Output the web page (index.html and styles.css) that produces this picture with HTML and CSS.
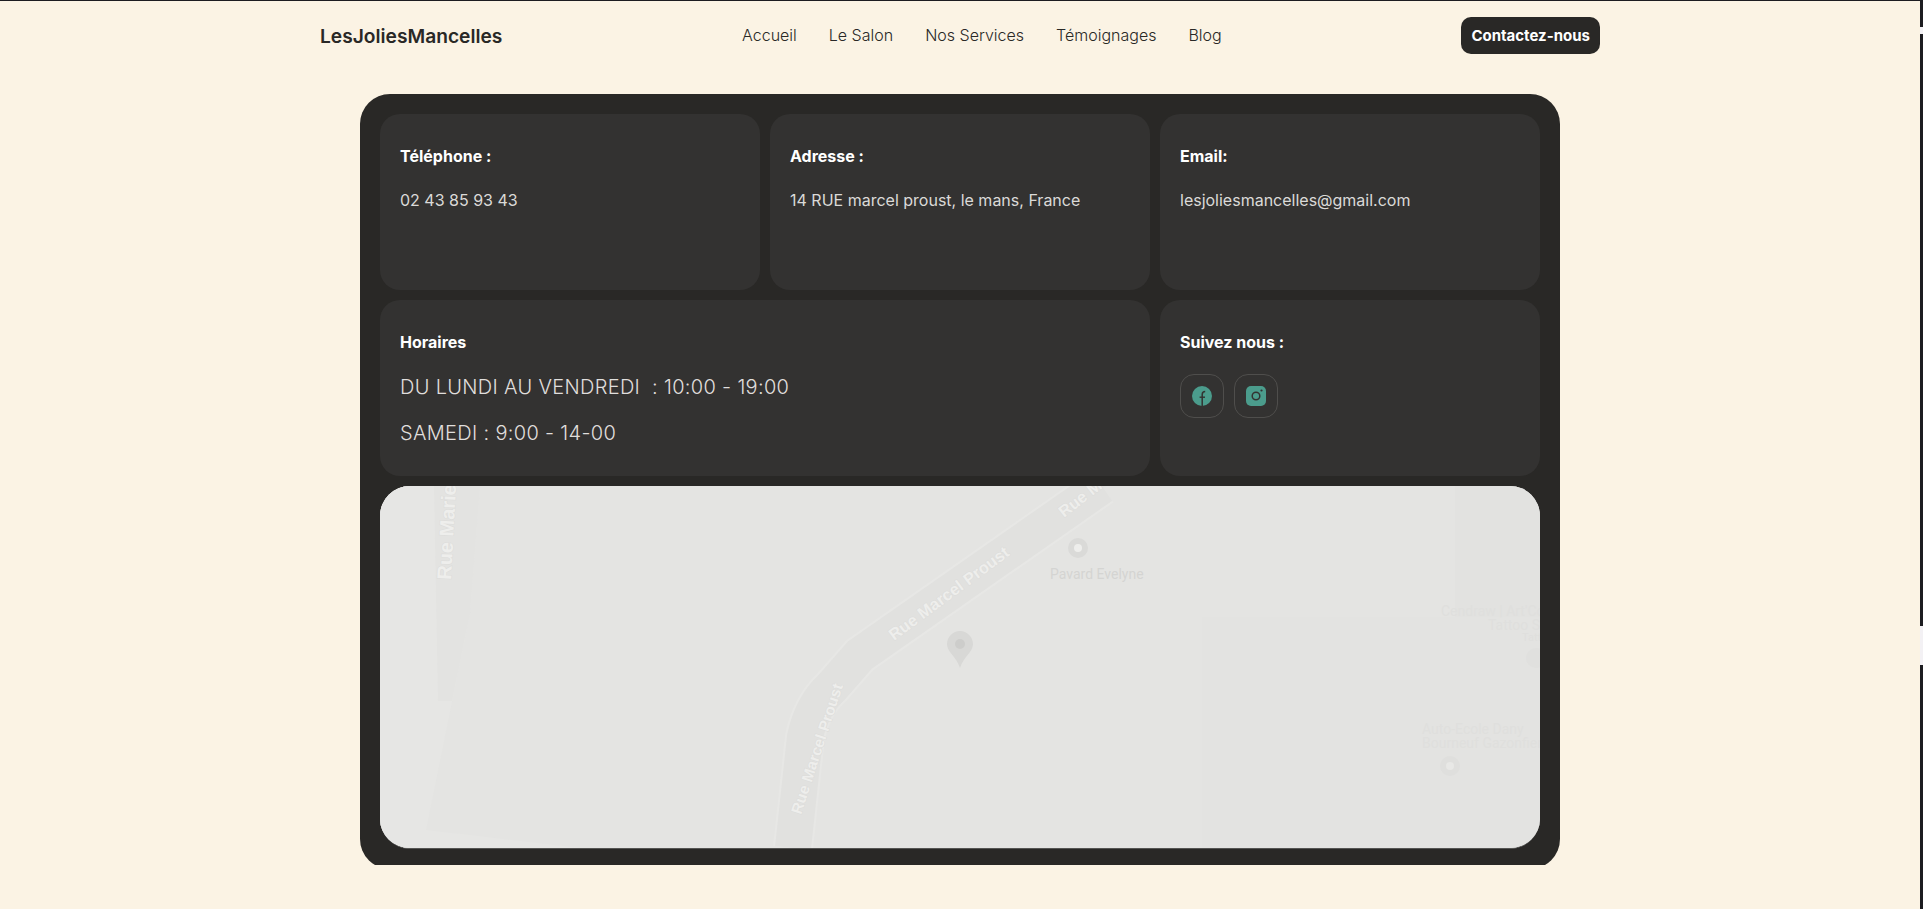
FILE: index.html
```html
<!DOCTYPE html>
<html lang="fr">
  <head>
    <meta charset="UTF-8" />
    <meta name="viewport" content="width=device-width, initial-scale=1.0" />
    <title>LesJoliesMancelles - Contact</title>
    <link rel="stylesheet" href="styles.css">
  </head>
  <body>
    <header class="site-header">
      <a class="logo" href="#">LesJoliesMancelles</a>
      <nav class="main-nav">
        <a href="#">Accueil</a>
        <a href="#">Le Salon</a>
        <a href="#">Nos Services</a>
        <a href="#">Témoignages</a>
        <a href="#">Blog</a>
      </nav>
      <a class="btn-contact" href="#">Contactez-nous</a>
    </header>

    <main class="contact-clip">
      <section class="contact-card">
        <div class="info-row">
          <div class="info-box">
            <h3>Téléphone :</h3>
            <p>02 43 85 93 43</p>
          </div>
          <div class="info-box">
            <h3>Adresse :</h3>
            <p>14 RUE marcel proust, le mans, France</p>
          </div>
          <div class="info-box">
            <h3>Email:</h3>
            <p>lesjoliesmancelles@gmail.com</p>
          </div>
        </div>

        <div class="info-row info-row-second">
          <div class="info-box info-box-wide">
            <h3>Horaires</h3>
            <p class="hours">DU LUNDI AU VENDREDI &nbsp;: 10:00 - 19:00</p>
            <p class="hours">SAMEDI : 9:00 - 14-00</p>
          </div>
          <div class="info-box">
            <h3>Suivez nous :</h3>
            <div class="socials">
              <a class="social-link" href="#" aria-label="Facebook">
                <svg viewBox="0 0 20 20" width="20" height="20">
                  <circle cx="10" cy="10" r="10" fill="#4b9c8c" />
                  <path d="M10.2 20v-11.4c0-2 1-3 3-3" fill="none" stroke="#333231" stroke-width="1.5" />
                  <path d="M7.6 11.2h5.4" fill="none" stroke="#333231" stroke-width="1.4" />
                </svg>
              </a>
              <a class="social-link" href="#" aria-label="Instagram">
                <svg viewBox="0 0 20 20" width="20" height="20">
                  <rect width="20" height="20" rx="5" fill="#4b9c8c" />
                  <circle cx="10" cy="10" r="3.8" fill="none" stroke="#333231" stroke-width="1.5" />
                  <circle cx="15.5" cy="4.5" r="1.1" fill="#333231" />
                </svg>
              </a>
            </div>
          </div>
        </div>

        <div class="map">
          <svg viewBox="0 0 1160 362" width="1160" height="362">
            <rect x="822" y="131" width="338" height="231" fill="#e3e3e1" />
            <rect x="1075" y="0" width="85" height="131" fill="#e2e2e0" />
            <rect x="0" y="0" width="31" height="362" fill="#e2e2e0" />
            <path d="M31 0 L100 0 L90 127 L46 344 L200 362 L0 362 L0 0 Z" fill="#e6e6e4" />
            <path d="M54 0 L100 0 L90 127 L72 215 L58 215 Z" fill="#e3e3e1" />
            <path d="M413 362 L425 251 C430 228 440 212 452 201 L480 169 L722 0" fill="none" stroke="#e7e7e5" stroke-width="40" />
            <path d="M413 362 L425 251 C430 228 440 212 452 201 L480 169 L722 0" fill="none" stroke="#e1e1df" stroke-width="36" />
            <g class="road-label">
              <text class="road-label-big" transform="translate(71 94) rotate(-87)">Rue Marie</text>
              <text transform="translate(514 155) rotate(-36.5)">Rue Marcel Proust</text>
              <text class="road-label-small" transform="translate(421 329) rotate(-72)">Rue Marcel Proust</text>
              <text transform="translate(684 32) rotate(-38)">Rue Marcel Proust</text>
            </g>
            <path d="M580 145 C573 145 567 151 567 158 C567 166 576 170 580 182 C584 170 593 166 593 158 C593 151 587 145 580 145 Z" fill="#d8d8d6" />
            <circle cx="580" cy="158" r="5" fill="#cdcdcb" />
            <g class="poi-pin">
              <circle cx="698" cy="62" r="10" fill="#dadad8" />
              <circle cx="698" cy="62" r="4" fill="#eeeeec" />
              <circle cx="1156" cy="172" r="10" fill="#e0e0de" />
              <circle cx="1070" cy="280" r="10" fill="#dfdfdd" />
              <circle cx="1070" cy="280" r="4" fill="#e8e8e6" />
            </g>
            <text class="poi-label" x="670" y="93">Pavard Evelyne</text>
            <g class="poi-label poi-label-far">
              <text x="1061" y="130">Cendraw | Art'Corps</text>
              <text x="1108" y="144">Tattoo Shop</text>
              <text x="1142" y="155" class="poi-small">Tattoo</text>
              <text x="1042" y="248">Auto-Ecole Dany</text>
              <text x="1042" y="262">Bourneuf Gazonfier</text>
            </g>
          </svg>
        </div>
      </section>
    </main>

    <div class="scrollbar">
      <div class="scrollbar-notch"></div>
      <div class="scrollbar-thumb"></div>
    </div>
  </body>
</html>
```

FILE: styles.css
```css
* {
  box-sizing: border-box;
}
html,
body {
  height: 100%;
}
body {
  margin: 0;
  overflow: hidden;
  font-family: Inter, "Liberation Sans", sans-serif;
  color: #292826;
  background-color: #fbf3e4;
  border-top: 1px solid #1c1c20;
}
a {
  color: inherit;
  text-decoration: none;
}

/* header */
.site-header {
  width: 1280px;
  height: 70px;
  margin-left: 320px;
  padding-top: 16px;
  display: flex;
  justify-content: space-between;
  align-items: flex-start;
}
.logo {
  font-size: 19.2px;
  font-weight: 600;
  line-height: 39px;
}
.main-nav {
  display: flex;
  gap: 32px;
  font-size: 16px;
  font-weight: 300;
  line-height: 36px;
}
.btn-contact {
  height: 37px;
  padding: 0 10px;
  border-radius: 10px;
  background-color: #292826;
  color: #fff;
  font-size: 15px;
  font-weight: 700;
  line-height: 37px;
}

/* contact card */
.contact-clip {
  width: 1920px;
  height: 794px;
  padding: 23px 360px 0;
  overflow: hidden;
}
.contact-card {
  width: 1200px;
  padding: 20px;
  border-radius: 30px;
  background-color: #292826;
}
.info-row {
  display: grid;
  grid-template-columns: repeat(3, 1fr);
  gap: 10px;
  margin-bottom: 10px;
}
.info-row-second {
  grid-template-columns: 770px 380px;
}
.info-box {
  height: 176px;
  padding: 31px 20px 0;
  border-radius: 20px;
  background-color: #333231;
}
.info-box h3 {
  margin: 0;
  color: #fff;
  font-size: 16px;
  font-weight: 700;
  line-height: 22px;
}
.info-box p {
  margin: 22px 0 0;
  color: #dbdad8;
  font-size: 16px;
  font-weight: 400;
  line-height: 22px;
}
.info-box .hours {
  margin-top: 20px;
  color: #e0dfdd;
  font-size: 20px;
  font-weight: 300;
  letter-spacing: 0.32px;
  line-height: 28px;
}
.info-box .hours + .hours {
  margin-top: 18px;
}
.socials {
  display: flex;
  gap: 10px;
  margin-top: 21px;
}
.social-link {
  width: 44px;
  height: 44px;
  display: flex;
  align-items: center;
  justify-content: center;
  border: 1px solid #4f4e4c;
  border-radius: 14px;
}

/* map */
.map {
  height: 363px;
  border-radius: 30px;
  border-bottom: 1px solid #555553;
  overflow: hidden;
  background-color: #e4e4e2;
}
.map svg {
  display: block;
}
.road-label text {
  font-family: "Liberation Sans", sans-serif;
  font-size: 16.5px;
  font-weight: 700;
  fill: #eeeeec;
  stroke: #dcdcda;
  stroke-width: 1px;
  paint-order: stroke;
}
.road-label .road-label-big {
  font-size: 20px;
}
.road-label .road-label-small {
  font-size: 15.5px;
}
.poi-label,
.poi-label text {
  font-family: Roboto, sans-serif;
  font-size: 14px;
  fill: #d4d4d2;
}
.poi-label-far text {
  fill: #dfdfdd;
}
.poi-label-far .poi-small {
  font-size: 11px;
}

/* thin window scrollbar on the right edge */
.scrollbar {
  position: fixed;
  top: 0;
  right: 0;
  bottom: 0;
  width: 3px;
  background-color: #1c1c20;
}
.scrollbar-notch {
  height: 7px;
  margin-top: 27px;
  background-color: #f3f1f4;
}
.scrollbar-thumb {
  height: 39px;
  margin-top: 592px;
  background-color: #f3f1f4;
}
```
